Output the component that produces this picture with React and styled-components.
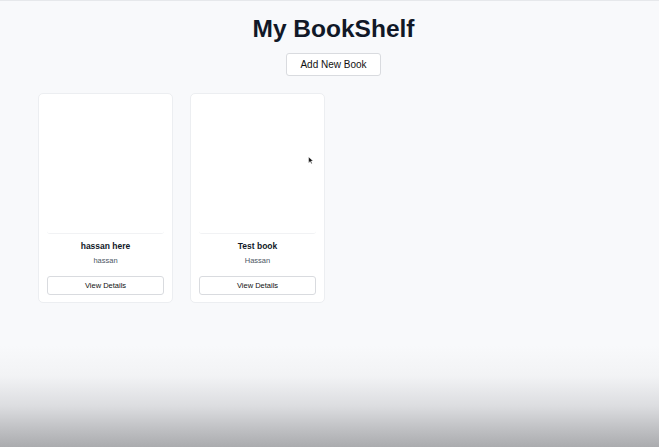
import styled, { createGlobalStyle } from 'styled-components';

const GlobalStyle = createGlobalStyle`
  html, body {
    margin: 0;
    padding: 0;
  }
  body {
    font-family: "Liberation Sans", Arial, sans-serif;
    background: #f8f9fb;
  }
`;

const books = [
  { id: 1, title: 'hassan here', author: 'hassan' },
  { id: 2, title: 'Test book', author: 'Hassan', cursor: true },
];

export default function App() {
  return (
    <>
      <GlobalStyle />
      <Page>
        <Title>My BookShelf</Title>
        <AddButton>Add New Book</AddButton>
        <Grid>
          {books.map(book => (
            <Card key={book.id}>
              <Cover>
                {book.cursor && (
                  <Cursor viewBox="0 0 10 14" width="6" height="9">
                    <path d="M1 1 L1 11 L3.6 8.6 L5.4 12.6 L7 11.9 L5.3 8 L8.6 8 Z" fill="#111" stroke="#fff" strokeWidth="0.8" />
                  </Cursor>
                )}
              </Cover>
              <BookTitle>{book.title}</BookTitle>
              <Author>{book.author}</Author>
              <DetailsButton>View Details</DetailsButton>
            </Card>
          ))}
        </Grid>
      </Page>
    </>
  );
}

const Page = styled.div`
  height: 447px;
  box-sizing: border-box;
  border-top: 1px solid #e6e8eb;
  padding-left: 8px;
  display: flex;
  flex-direction: column;
  align-items: center;
  background: linear-gradient(
    to bottom,
    #f8f9fb 0px,
    #f8f9fb 345px,
    #f2f3f5 375px,
    #dcdde0 405px,
    #bdbec1 430px,
    #a9aaad 447px
  );
`;

const Title = styled.h1`
  margin: 12px 0 0;
  font-size: 24.5px;
  line-height: 32px;
  font-weight: 700;
  color: #111827;
`;

const AddButton = styled.button`
  margin-top: 8px;
  width: 95px;
  height: 23px;
  padding: 0;
  background: #ffffff;
  border: 1px solid #d9dbdf;
  border-radius: 3px;
  font-family: "Liberation Sans", Arial, sans-serif;
  font-size: 10px;
  color: #111;
`;

const Grid = styled.div`
  align-self: stretch;
  display: flex;
  gap: 17px;
  padding: 17px 0 0 30px;
`;

const Card = styled.div`
  width: 135px;
  height: 210px;
  box-sizing: border-box;
  padding: 8px 8px 0;
  background: #ffffff;
  border: 1px solid #eceef1;
  border-radius: 5px;
  display: flex;
  flex-direction: column;
  align-items: center;
`;

const Cover = styled.div`
  position: relative;
  align-self: stretch;
  height: 131px;
  background: #ffffff;
  border-bottom: 1px solid #f1f2f4;
  border-radius: 3px;
`;

const Cursor = styled.svg`
  position: absolute;
  left: 109px;
  top: 54px;
`;

const BookTitle = styled.div`
  margin-top: 7px;
  font-size: 8.5px;
  font-weight: 700;
  color: #111827;
`;

const Author = styled.div`
  margin-top: 5px;
  font-size: 7.5px;
  color: #4b5563;
`;

const DetailsButton = styled.button`
  margin-top: 11px;
  align-self: stretch;
  height: 19px;
  padding: 0;
  background: #ffffff;
  border: 1px solid #d9dbdf;
  border-radius: 3px;
  font-family: "Liberation Sans", Arial, sans-serif;
  font-size: 7.5px;
  color: #111;
`;
